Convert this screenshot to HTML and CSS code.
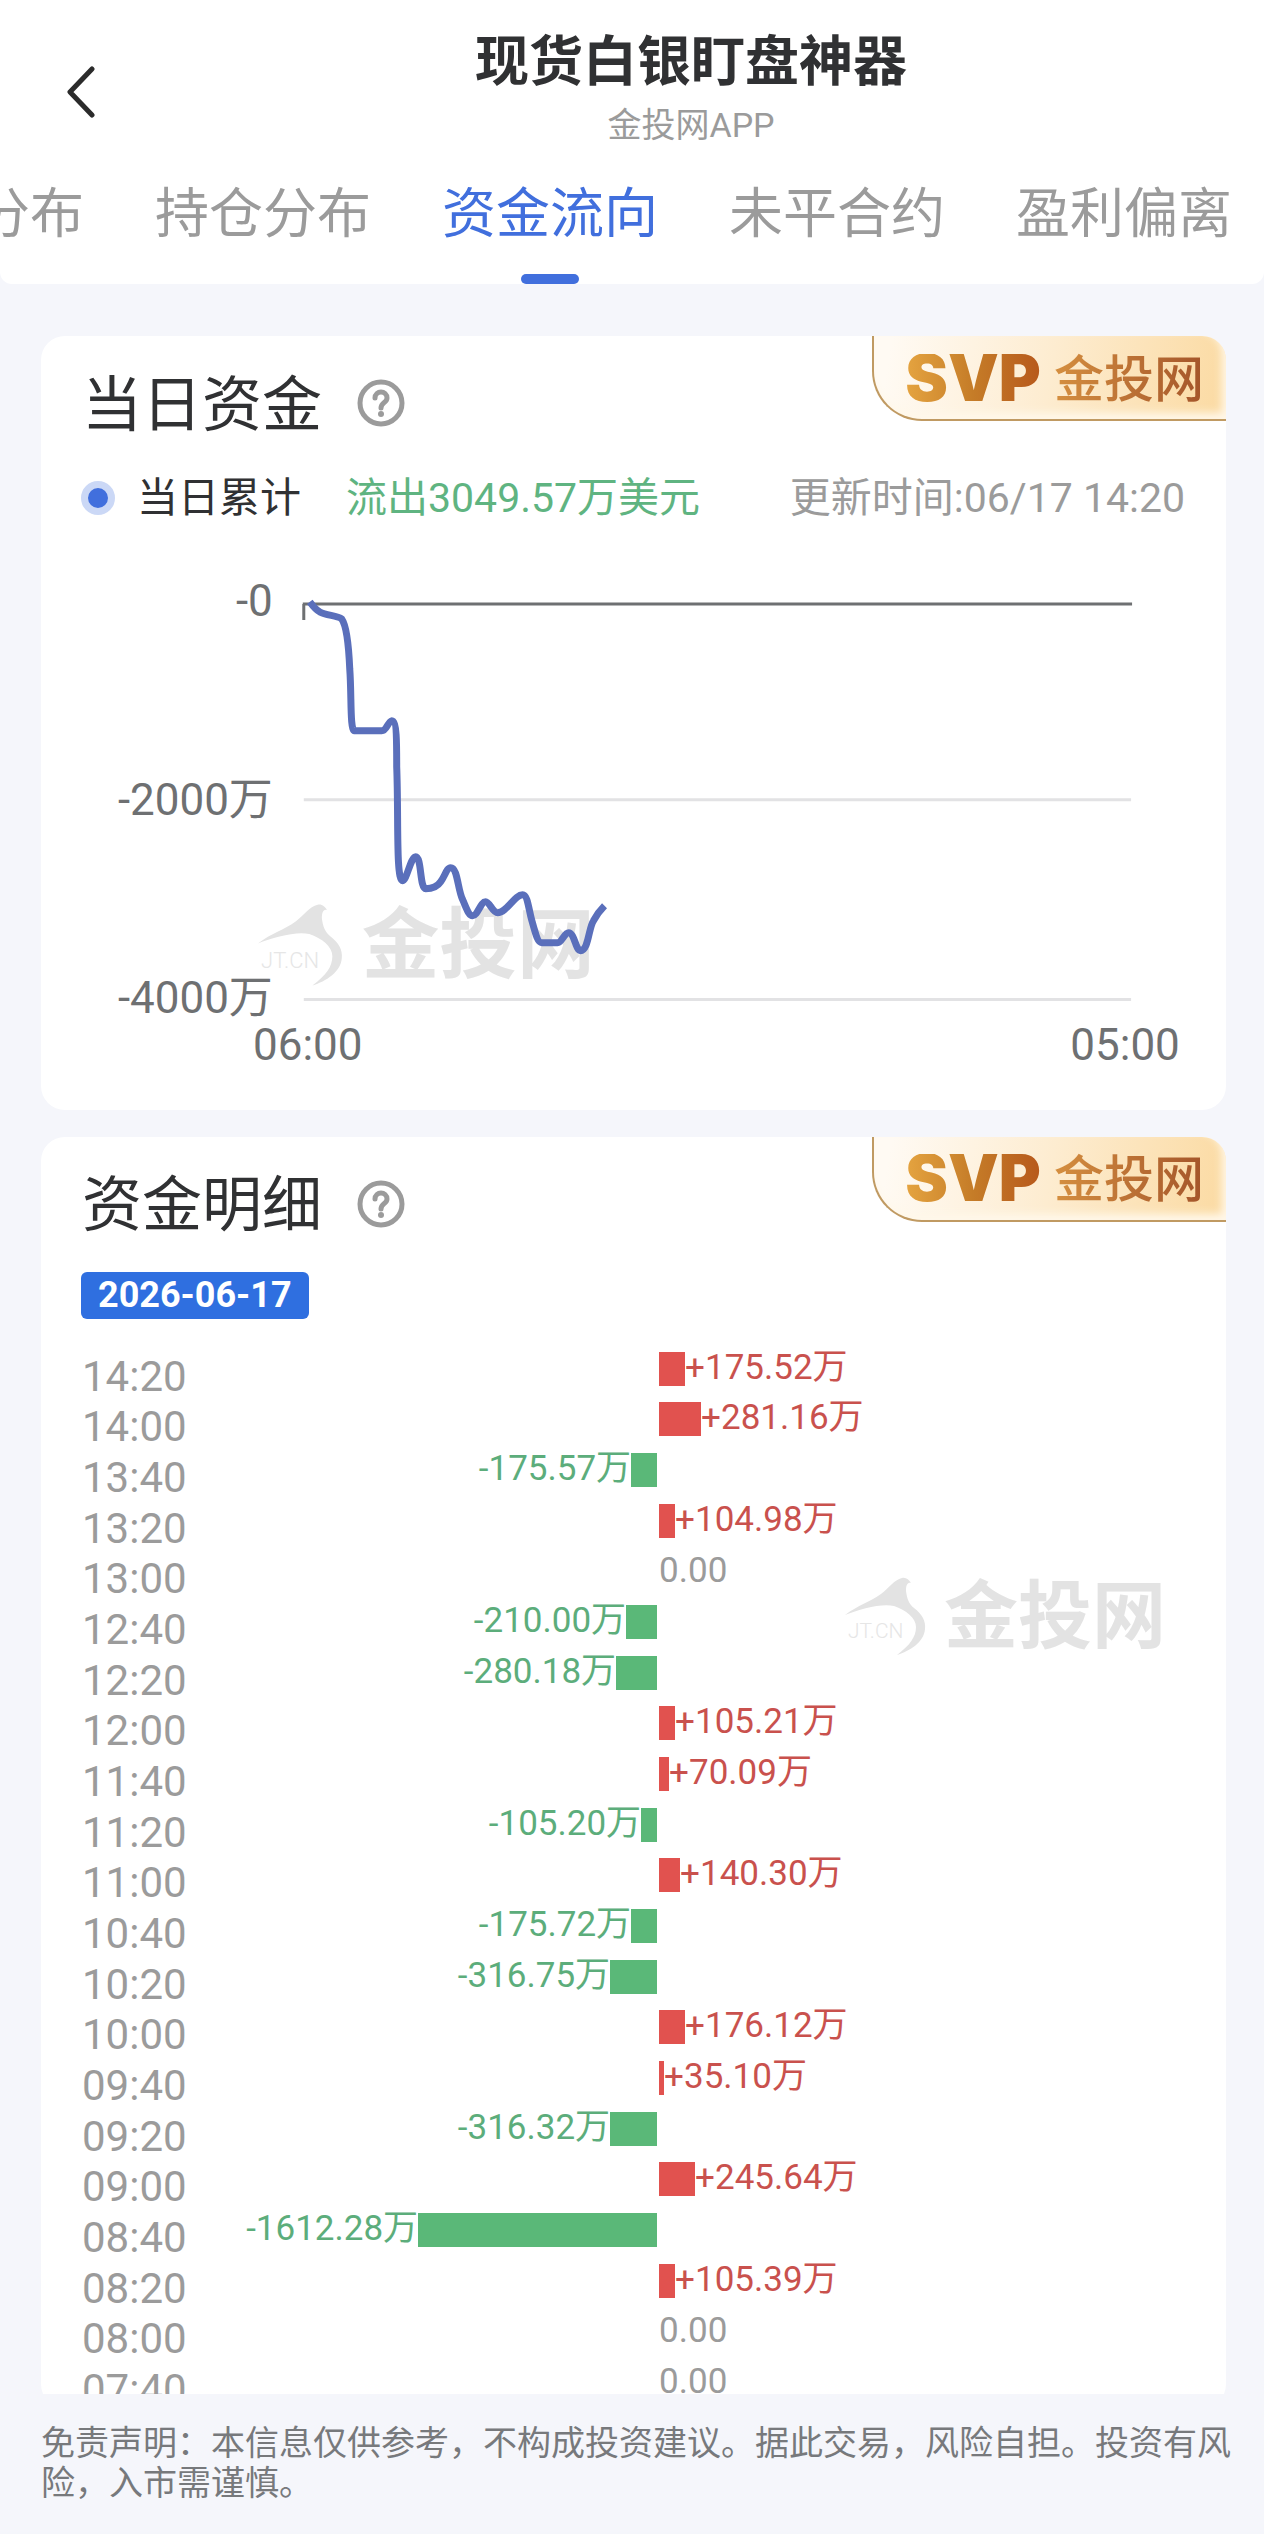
FILE: index.html
```html
<!DOCTYPE html>
<html lang="zh-CN">
<head>
<meta charset="UTF-8">
<meta name="viewport" content="width=device-width">
<title>现货白银盯盘神器</title>
<link rel="stylesheet" href="styles.css">
</head>
<body>
  <svg width="0" height="0" class="defs" aria-hidden="true">
    <symbol id="watermark" viewBox="0 0 320 80">
      <path d="M1 38 C14 28 26 25 37 17 C45 11 50 3 58 1 C62 0 65 3 67 6 C63 5 62 9 62 14 C63 22 65 27 70 31 C78 37 82 44 81 52 C80 65 66 74 53 78 C66 68 72 60 72 50 C72 41 62 33 50 29 C38 26 16 32 1 38 Z"/>
      <text x="4" y="61" class="wm-small">JT.CN</text>
      <text x="100" y="65" class="wm-text">金投网</text>
    </symbol>
    <symbol id="help" viewBox="0 0 48 48">
      <circle cx="24" cy="24" r="21" fill="none" stroke="#9b9b9b" stroke-width="5"/>
      <path d="M18 19 C18 11 30 11 30 19 C30 24 24 23 24 29" fill="none" stroke="#9b9b9b" stroke-width="5" stroke-linecap="round"/>
      <circle cx="24" cy="35" r="3" fill="#9b9b9b"/>
    </symbol>
    <linearGradient id="gold" x1="0" y1="0" x2="1" y2="0">
      <stop offset="0" stop-color="#e5a440"/>
      <stop offset="0.5" stop-color="#c57c28"/>
      <stop offset="1" stop-color="#b7591c"/>
    </linearGradient>
  </svg>

  <header class="header">
    <div class="topbar">
      <button class="back" type="button" aria-label="返回">
        <svg width="30" height="52" viewBox="0 0 30 52"><path d="M26 3 L4 26 L26 49" fill="none" stroke="#2b2b2b" stroke-width="5" stroke-linecap="round" stroke-linejoin="round"/></svg>
      </button>
      <div class="names">
        <h1>现货白银盯盘神器</h1>
        <p>金投网APP</p>
      </div>
    </div>
    <nav class="tabs">
      <a href="#">分布</a>
      <a href="#">持仓分布</a>
      <a href="#" class="active">资金流向</a>
      <a href="#">未平合约</a>
      <a href="#">盈利偏离</a>
    </nav>
  </header>

  <main class="main">
    <section class="card">
      <div class="brand"><svg width="147" height="48" viewBox="0 0 147 48"><text x="73" y="47" class="svp">SVP</text></svg><span>金投网</span></div>
      <div class="card-head">
        <h2>当日资金</h2>
        <button class="help" type="button" aria-label="说明"><svg width="48" height="48"><use href="#help"/></svg></button>
      </div>
      <div class="legend">
        <i class="dot"></i>
        <span class="legend-name">当日累计</span>
        <span class="legend-value">流出3049.57万美元</span>
        <span class="updated">更新时间:06/17 14:20</span>
      </div>
      <svg class="chart" viewBox="0 0 1186 584">
        <use href="#watermark" x="216" y="378" width="336" height="84"/>
        <path class="grid" d="M263 274 H1091 M263 474 H1091"/>
        <path class="axis" d="M262 78 H1092 M263 78 V94"/>
        <path class="line" d="M269 76 C272 80 275 84 279 86 C286 90 296 89 301 93 C306 100 308 120 309 143 C311 170 309 206 314 205 H341 C346 205 347 196 351 195 C356 195 356 216 356 241 C358 291 355 355 362 355 C366 355 370 331 375 331 C381 331 379 363 385 363 C391 363 396 362 400 356 C404 351 406 342 410 342 C417 342 417 364 422 374 C426 383 428 390 432 390 C437 390 440 376 445 376 C449 376 452 387 457 387 C466 387 474 369 482 369 C487 369 488 383 491 394 C495 408 497 417 501 417 H517 C521 417 524 407 528 407 C534 407 535 425 540 425 C548 425 548 402 553 395 C556 389 561 383 564 380"/>
        <g class="ylabels">
          <text x="232" y="90">-0</text>
          <text x="232" y="289">-2000万</text>
          <text x="232" y="487">-4000万</text>
        </g>
        <g class="xlabels">
          <text x="267" y="534">06:00</text>
          <text x="1085" y="534">05:00</text>
        </g>
      </svg>
    </section>

    <section class="card">
      <div class="brand"><svg width="147" height="48" viewBox="0 0 147 48"><text x="73" y="47" class="svp">SVP</text></svg><span>金投网</span></div>
      <div class="card-head">
        <h2>资金明细</h2>
        <button class="help" type="button" aria-label="说明"><svg width="48" height="48"><use href="#help"/></svg></button>
      </div>
      <div class="date">2026-06-17</div>
      <svg class="mark" viewBox="0 0 320 80"><use href="#watermark"/></svg>
      <table class="flow">
        <tbody id="flow"></tbody>
      </table>
    </section>
  </main>

  <footer class="footer">免责声明：本信息仅供参考，不构成投资建议。据此交易，风险自担。投资有风险，入市需谨慎。</footer>
  <script src="script.js"></script>
</body>
</html>
```
FILE: styles.css
```css
* {
  box-sizing: border-box;
}
body {
  margin: 0;
  height: 100vh;
  display: flex;
  flex-direction: column;
  background: #f5f6fb;
  color: #303133;
  font-family: Roboto, "Noto Sans CJK SC", sans-serif;
}
h1, h2, p {
  margin: 0;
}
button {
  padding: 0;
  border: 0;
  background: none;
}
button svg {
  display: block;
}
.defs {
  position: absolute;
}

/* header */
.header {
  flex: none;
  padding-top: 30px;
  background: #fff;
  border-radius: 0 0 12px 12px;
}
.topbar {
  display: grid;
  grid-template-columns: 118px 1fr;
  align-items: center;
}
.back {
  justify-self: end;
  padding-right: 22px;
}
.names {
  text-align: center;
}
.names h1 {
  font-size: 54px;
  line-height: 66px;
  font-weight: 700;
}
.names p {
  font-size: 34px;
  line-height: 58px;
  color: #9b9b9b;
}
.tabs {
  display: flex;
  justify-content: flex-end;
  gap: 71px;
  padding-right: 32px;
  overflow: hidden;
}
.tabs a {
  position: relative;
  flex: none;
  padding-bottom: 8px;
  font-size: 54px;
  line-height: 122px;
  color: #9b9b9b;
  text-decoration: none;
}
.tabs .active {
  color: #416fdd;
}
.tabs .active::after {
  content: "";
  position: absolute;
  left: 50%;
  bottom: 0;
  width: 58px;
  height: 10px;
  margin-left: -29px;
  border-radius: 5px;
  background: #416fdd;
}

/* cards */
.main {
  flex: 1;
  min-height: 0;
  overflow: hidden;
  padding: 52px 38px 0 41px;
}
.card {
  position: relative;
  margin-bottom: 27px;
  padding-top: 25px;
  border-radius: 24px;
  background: #fff;
}
.card-head {
  display: flex;
  align-items: center;
  gap: 35px;
  height: 84px;
  padding-left: 41px;
}
.card-head h2 {
  padding-top: 5px;
  font-size: 60px;
  line-height: 84px;
  font-weight: 400;
}
.brand {
  position: absolute;
  top: 0;
  right: 0;
  display: flex;
  align-items: center;
  gap: 7px;
  height: 85px;
  padding: 0 22px 0 26px;
  border-left: 2px solid #c09a62;
  border-bottom: 2px solid #c09a62;
  border-radius: 0 24px 0 50px;
  background: linear-gradient(100deg, #fffaf3 5%, #fdecd0 50%, #fbdaa2);
  box-shadow: inset -4px -6px 8px #fff8ea;
}
.brand span {
  padding-top: 4px;
  font-size: 50px;
  line-height: 80px;
  font-weight: 500;
  color: transparent;
  background: linear-gradient(90deg, #d58f40, #a4552a);
  -webkit-background-clip: text;
  background-clip: text;
}
.svp {
  font-family: Inter, sans-serif;
  font-size: 64px;
  font-weight: 900;
  text-anchor: middle;
  fill: url(#gold);
}
.legend {
  display: flex;
  align-items: center;
  margin-top: 25px;
  padding: 0 41px 0 40px;
  font-size: 41px;
  line-height: 56px;
}
.dot {
  width: 34px;
  height: 34px;
  border: 7px solid #cbd8f6;
  border-radius: 50%;
  background: #416fdd;
}
.legend-name {
  margin-left: 22px;
}
.legend-value {
  margin-left: 45px;
  color: #5fb481;
}
.updated {
  margin-left: auto;
  color: #9b9b9b;
}

/* chart */
.chart {
  display: block;
  width: 100%;
}
.chart text {
  fill: #6e7072;
}
.grid, .axis, .line {
  fill: none;
  stroke-width: 3px;
}
.grid {
  stroke: #e2e2e4;
}
.axis {
  stroke: #6e7072;
}
.line {
  stroke: #5a6fbb;
  stroke-width: 7px;
  stroke-linejoin: round;
}
.ylabels, .xlabels {
  font-size: 44px;
}
.ylabels {
  text-anchor: end;
}
.xlabels {
  text-anchor: middle;
}
#watermark path, #watermark .wm-text {
  fill: #e3e3e3;
}
#watermark .wm-text {
  font-size: 74px;
  font-weight: 700;
}
#watermark .wm-small {
  font-size: 21px;
  font-weight: 300;
  fill: #e6e6e6;
}
.mark {
  position: absolute;
  top: 440px;
  right: 62px;
  width: 320px;
}

/* detail */
.date {
  width: max-content;
  margin: 26px 0 25px 40px;
  padding: 0 17px;
  border-radius: 6px;
  background: #2f6fe0;
  color: #fff;
  font-size: 36px;
  line-height: 47px;
  font-weight: 700;
}
.flow {
  position: relative;
  table-layout: fixed;
  width: 100%;
  height: 1064px;
  padding: 0 38px 0 41px;
  border-spacing: 0;
}
.flow th, .flow td {
  padding: 0;
  text-align: left;
}
.flow th {
  width: 12%;
  padding-top: 15px;
  font-size: 42px;
  line-height: 35px;
  font-weight: 400;
  color: #9b9b9b;
}
.flow .out {
  width: 40%;
}
.flow .in {
  padding-left: 2px;
}
.flow div {
  display: flex;
  font-size: 35px;
  line-height: 32px;
  color: #9b9b9b;
}
.flow i {
  height: 34px;
}
.flow .out div {
  justify-content: flex-end;
  color: #5cad7b;
}
.flow .out i {
  background: #5ab878;
}
.flow .in .up {
  color: #c9514d;
}
.flow .in i {
  background: #e1524f;
}

.footer {
  flex: none;
  padding: 29px 32px 31px 41px;
  font-size: 34px;
  line-height: 40px;
  color: #77797c;
}
```
FILE: script.js
```js
const rows = [
  ["14:20", "+175.52"],
  ["14:00", "+281.16"],
  ["13:40", "-175.57"],
  ["13:20", "+104.98"],
  ["13:00", "0.00"],
  ["12:40", "-210.00"],
  ["12:20", "-280.18"],
  ["12:00", "+105.21"],
  ["11:40", "+70.09"],
  ["11:20", "-105.20"],
  ["11:00", "+140.30"],
  ["10:40", "-175.72"],
  ["10:20", "-316.75"],
  ["10:00", "+176.12"],
  ["09:40", "+35.10"],
  ["09:20", "-316.32"],
  ["09:00", "+245.64"],
  ["08:40", "-1612.28"],
  ["08:20", "+105.39"],
  ["08:00", "0.00"],
  ["07:40", "0.00"]
];

let html = "";
for (const [time, value] of rows) {
  const n = parseFloat(value);
  const bar = '<i style="width:' + Math.round(Math.abs(n) * 0.148) + 'px"></i>';
  let left = "";
  let right = "";
  if (n < 0) {
    left = "<div><span>" + value + "万</span>" + bar + "</div>";
  } else if (n > 0) {
    right = '<div class="up">' + bar + "<span>" + value + "万</span></div>";
  } else {
    right = "<div><span>" + value + "</span></div>";
  }
  html += '<tr><th scope="row">' + time + '</th><td class="out">' + left + '</td><td class="in">' + right + "</td></tr>";
}
document.getElementById("flow").innerHTML = html;
```
